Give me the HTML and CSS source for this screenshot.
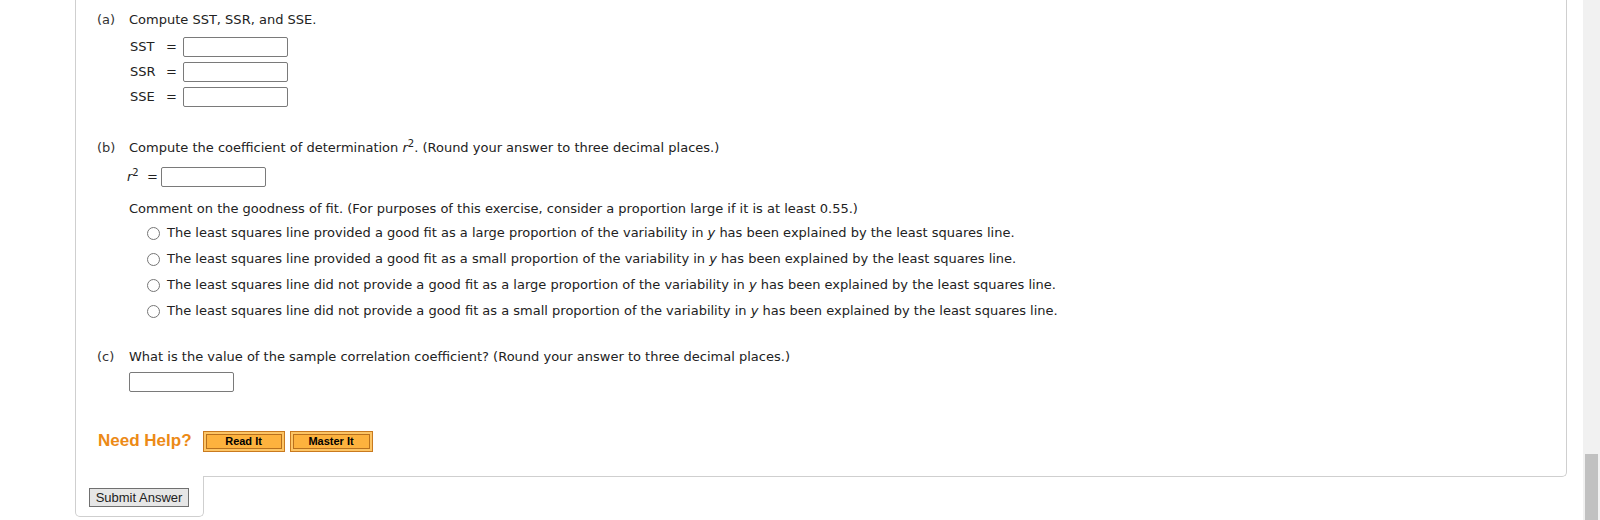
FILE: index.html
```html
<!DOCTYPE html>
<html>
<head>
<meta charset="utf-8">
<link rel="stylesheet" href="styles.css">
</head>
<body>
<div class="page">
  <div class="card">
    <div class="part part-a">
      <div class="tag">(a)</div>
      <div class="body">
        <div class="q">Compute SST, SSR, and SSE.</div>
        <div class="fields">
          <div class="field"><span class="lbl">SST</span><span class="eq">=</span><input class="box" type="text"></div>
          <div class="field"><span class="lbl">SSR</span><span class="eq">=</span><input class="box" type="text"></div>
          <div class="field"><span class="lbl">SSE</span><span class="eq">=</span><input class="box" type="text"></div>
        </div>
      </div>
    </div>

    <div class="part part-b">
      <div class="tag">(b)</div>
      <div class="body">
        <div class="q">Compute the coefficient of determination <i>r</i><sup>2</sup>. (Round your answer to three decimal places.)</div>
        <div class="field r2"><span class="lbl"><i>r</i><sup>2</sup></span><span class="eq">=</span><input class="box" type="text"></div>
        <div class="q comment">Comment on the goodness of fit. (For purposes of this exercise, consider a proportion large if it is at least 0.55.)</div>
        <div class="opts">
          <label class="opt"><input type="radio" name="fit"><span>The least squares line provided a good fit as a large proportion of the variability in <i>y</i> has been explained by the least squares line.</span></label>
          <label class="opt"><input type="radio" name="fit"><span>The least squares line provided a good fit as a small proportion of the variability in <i>y</i> has been explained by the least squares line.</span></label>
          <label class="opt"><input type="radio" name="fit"><span>The least squares line did not provide a good fit as a large proportion of the variability in <i>y</i> has been explained by the least squares line.</span></label>
          <label class="opt"><input type="radio" name="fit"><span>The least squares line did not provide a good fit as a small proportion of the variability in <i>y</i> has been explained by the least squares line.</span></label>
        </div>
      </div>
    </div>

    <div class="part part-c">
      <div class="tag">(c)</div>
      <div class="body">
        <div class="q">What is the value of the sample correlation coefficient? (Round your answer to three decimal places.)</div>
        <input class="box single" type="text">
      </div>
    </div>

    <div class="help">
      <span class="need">Need Help?</span>
      <button class="hbtn read"><span>Read It</span></button>
      <button class="hbtn master"><span>Master It</span></button>
    </div>
  </div>
  <div class="submit-area">
    <button class="submit">Submit Answer</button>
  </div>
</div>
<div class="scrollbar"><div class="thumb"></div></div>
</body>
</html>
```

FILE: styles.css
```css
html, body {
  margin: 0;
  padding: 0;
  background: #fff;
  overflow: hidden;
}
body {
  font-family: "DejaVu Sans", Verdana, sans-serif;
  font-size: 13px;
  color: #222;
  height: 520px;
}
.page {
  padding-left: 75px;
}
.card {
  width: 1492px;
  height: 477px;
  box-sizing: border-box;
  border: 1px solid #cfcfcf;
  border-top: none;
  border-radius: 0 0 5px 0;
  padding: 12px 0 0 21px;
}
.part {
  display: flex;
  line-height: 16px;
}
.tag {
  width: 32px;
  flex: none;
  color: #333;
}
.body {
  display: flex;
  flex-direction: column;
  align-items: flex-start;
}
.fields {
  margin-top: 9px;
  display: flex;
  flex-direction: column;
  gap: 5px;
}
.field {
  display: flex;
  align-items: center;
  height: 20px;
}
.field .lbl {
  width: 37px;
  padding-left: 1px;
  box-sizing: border-box;
}
.field .eq {
  width: 17px;
}
.box {
  width: 105px;
  height: 20px;
  box-sizing: border-box;
  border: 1px solid #7a7a7a;
  border-radius: 2px;
  background: #fff;
  margin: 0;
  padding: 0;
}
sup {
  font-size: 10px;
  line-height: 0;
  vertical-align: 5px;
}
.part-b {
  margin-top: 33px;
}
.r2 {
  margin-top: 11px;
  margin-left: -2px;
}
.r2 .lbl {
  width: 20px;
  padding-left: 0;
}
.r2 .eq {
  width: 14px;
}
.comment {
  margin-top: 14px;
}
.opts {
  margin-top: 3px;
  display: flex;
  flex-direction: column;
}
.opt {
  display: flex;
  align-items: center;
  height: 26px;
  padding-left: 18px;
}
.opt input {
  margin: 0 7px 0 0;
  width: 13px;
  height: 13px;
}
.part-c {
  margin-top: 25px;
}
.single {
  margin-top: 7px;
}
.help {
  margin-top: 38px;
  display: flex;
  align-items: center;
  height: 22px;
}
.need {
  font-family: "Liberation Sans", Arial, sans-serif;
  font-weight: bold;
  font-size: 17px;
  color: #ec8a16;
  margin-left: 1px;
  margin-right: 11px;
}
.hbtn {
  font-family: "Liberation Sans", Arial, sans-serif;
  font-weight: bold;
  font-size: 11px;
  color: #000;
  height: 21px;
  box-sizing: border-box;
  padding: 2px;
  border: 1px solid #c97a1f;
  background: #fdc565;
  margin: 0 5px 0 0;
  display: flex;
  cursor: pointer;
}
.hbtn span {
  flex: 1;
  display: flex;
  align-items: center;
  justify-content: center;
  border: 1px solid #b8701d;
  background: #fdb23e;
}
.read { width: 82px; }
.master { width: 83px; }
.submit-area {
  width: 129px;
  height: 41px;
  box-sizing: border-box;
  margin-top: -1px;
  border: 1px solid #cfcfcf;
  border-top: none;
  border-radius: 0 0 5px 5px;
  background: #fff;
  padding: 12px 0 0 13px;
  position: relative;
}
.submit {
  font-family: "Liberation Sans", Arial, sans-serif;
  font-size: 13px;
  color: #222;
  width: 100px;
  height: 19px;
  box-sizing: border-box;
  border: 1px solid #707070;
  background: #e6e6e6;
  padding: 0;
  margin: 0;
  line-height: 16px;
}
.scrollbar {
  position: fixed;
  top: 0;
  right: 0;
  width: 17px;
  height: 520px;
  background: #f1f1f1;
}
.thumb {
  position: absolute;
  left: 2px;
  right: 2px;
  top: 454px;
  bottom: 0;
  background: #c1c1c1;
}
```
